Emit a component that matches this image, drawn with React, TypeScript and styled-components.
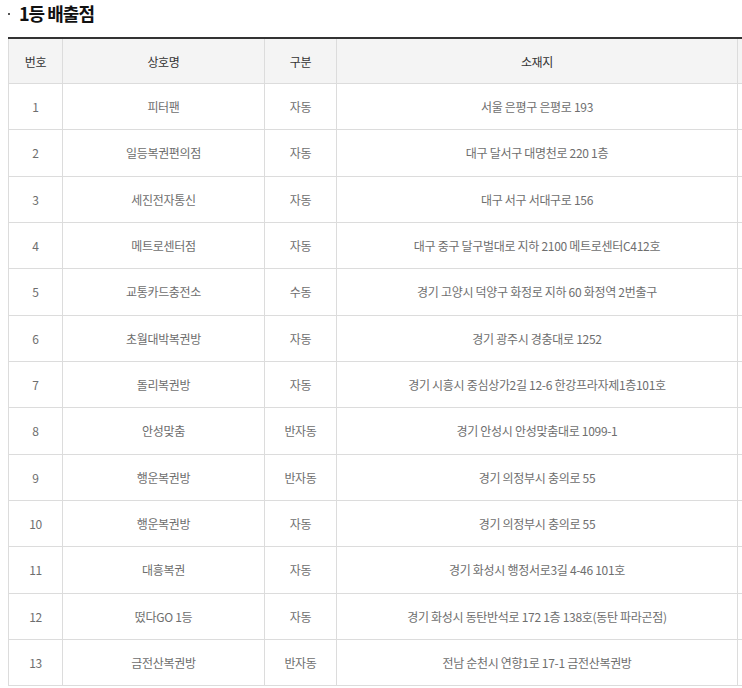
import React from "react";
import styled, { createGlobalStyle } from "styled-components";

const GlobalStyle = createGlobalStyle`
  html, body {
    margin: 0;
    padding: 0;
    overflow: hidden;
    background: #fff;
  }
  body {
    padding-left: 8px;
    font-family: "Noto Sans CJK KR", "Noto Sans", sans-serif;
  }
`;

const Section = styled.section`
  width: 829px;
`;

const Title = styled.h3`
  display: flex;
  align-items: center;
  gap: 9px;
  margin: 0 0 11px 0;
  height: 26px;
  font-size: 18px;
  font-weight: 700;
  letter-spacing: -1px;
  color: #111;
  &::before {
    content: "";
    display: block;
    width: 2px;
    height: 2px;
    background: #555;
    margin-top: 2px;
  }
`;

const Table = styled.table`
  width: 829px;
  table-layout: fixed;
  border-collapse: collapse;
  border-top: 2px solid #333;
  font-size: 12px;
  letter-spacing: -0.3px;
`;

const Th = styled.th`
  height: 44px;
  padding: 0;
  background: #f4f4f4;
  border: 1px solid #dcdcdc;
  border-top: none;
  font-weight: 400;
  color: #333;
  text-align: center;
`;

const Td = styled.td`
  height: 45.33px;
  padding: 0;
  border: 1px solid #dcdcdc;
  color: #6e6e6e;
  text-align: center;
  line-height: 21px;
`;

type Row = [string, string, string, string];

const rows: Row[] = [
  ["1", "피터팬", "자동", "서울 은평구 은평로 193"],
  ["2", "일등복권편의점", "자동", "대구 달서구 대명천로 220 1층"],
  ["3", "세진전자통신", "자동", "대구 서구 서대구로 156"],
  ["4", "메트로센터점", "자동", "대구 중구 달구벌대로 지하 2100 메트로센터C412호"],
  ["5", "교통카드충전소", "수동", "경기 고양시 덕양구 화정로 지하 60 화정역 2번출구"],
  ["6", "초월대박복권방", "자동", "경기 광주시 경충대로 1252"],
  ["7", "돌리복권방", "자동", "경기 시흥시 중심상가2길 12-6 한강프라자제1층101호"],
  ["8", "안성맞춤", "반자동", "경기 안성시 안성맞춤대로 1099-1"],
  ["9", "행운복권방", "반자동", "경기 의정부시 충의로 55"],
  ["10", "행운복권방", "자동", "경기 의정부시 충의로 55"],
  ["11", "대흥복권", "자동", "경기 화성시 행정서로3길 4-46 101호"],
  ["12", "떴다GO 1등", "자동", "경기 화성시 동탄반석로 172 1층 138호(동탄 파라곤점)"],
  ["13", "금전산복권방", "반자동", "전남 순천시 연향1로 17-1 금전산복권방"],
];

export default function App() {
  return (
    <>
      <GlobalStyle />
      <Section>
        <Title>1등 배출점</Title>
        <Table>
          <colgroup>
            <col style={{ width: 54 }} />
            <col style={{ width: 202 }} />
            <col style={{ width: 72 }} />
            <col style={{ width: 401 }} />
            <col style={{ width: 100 }} />
          </colgroup>
          <thead>
            <tr>
              <Th>번호</Th>
              <Th>상호명</Th>
              <Th>구분</Th>
              <Th>소재지</Th>
              <Th />
            </tr>
          </thead>
          <tbody>
            {rows.map((r) => (
              <tr key={r[0]}>
                <Td>{r[0]}</Td>
                <Td>{r[1]}</Td>
                <Td>{r[2]}</Td>
                <Td>{r[3]}</Td>
                <Td />
              </tr>
            ))}
          </tbody>
        </Table>
      </Section>
    </>
  );
}
